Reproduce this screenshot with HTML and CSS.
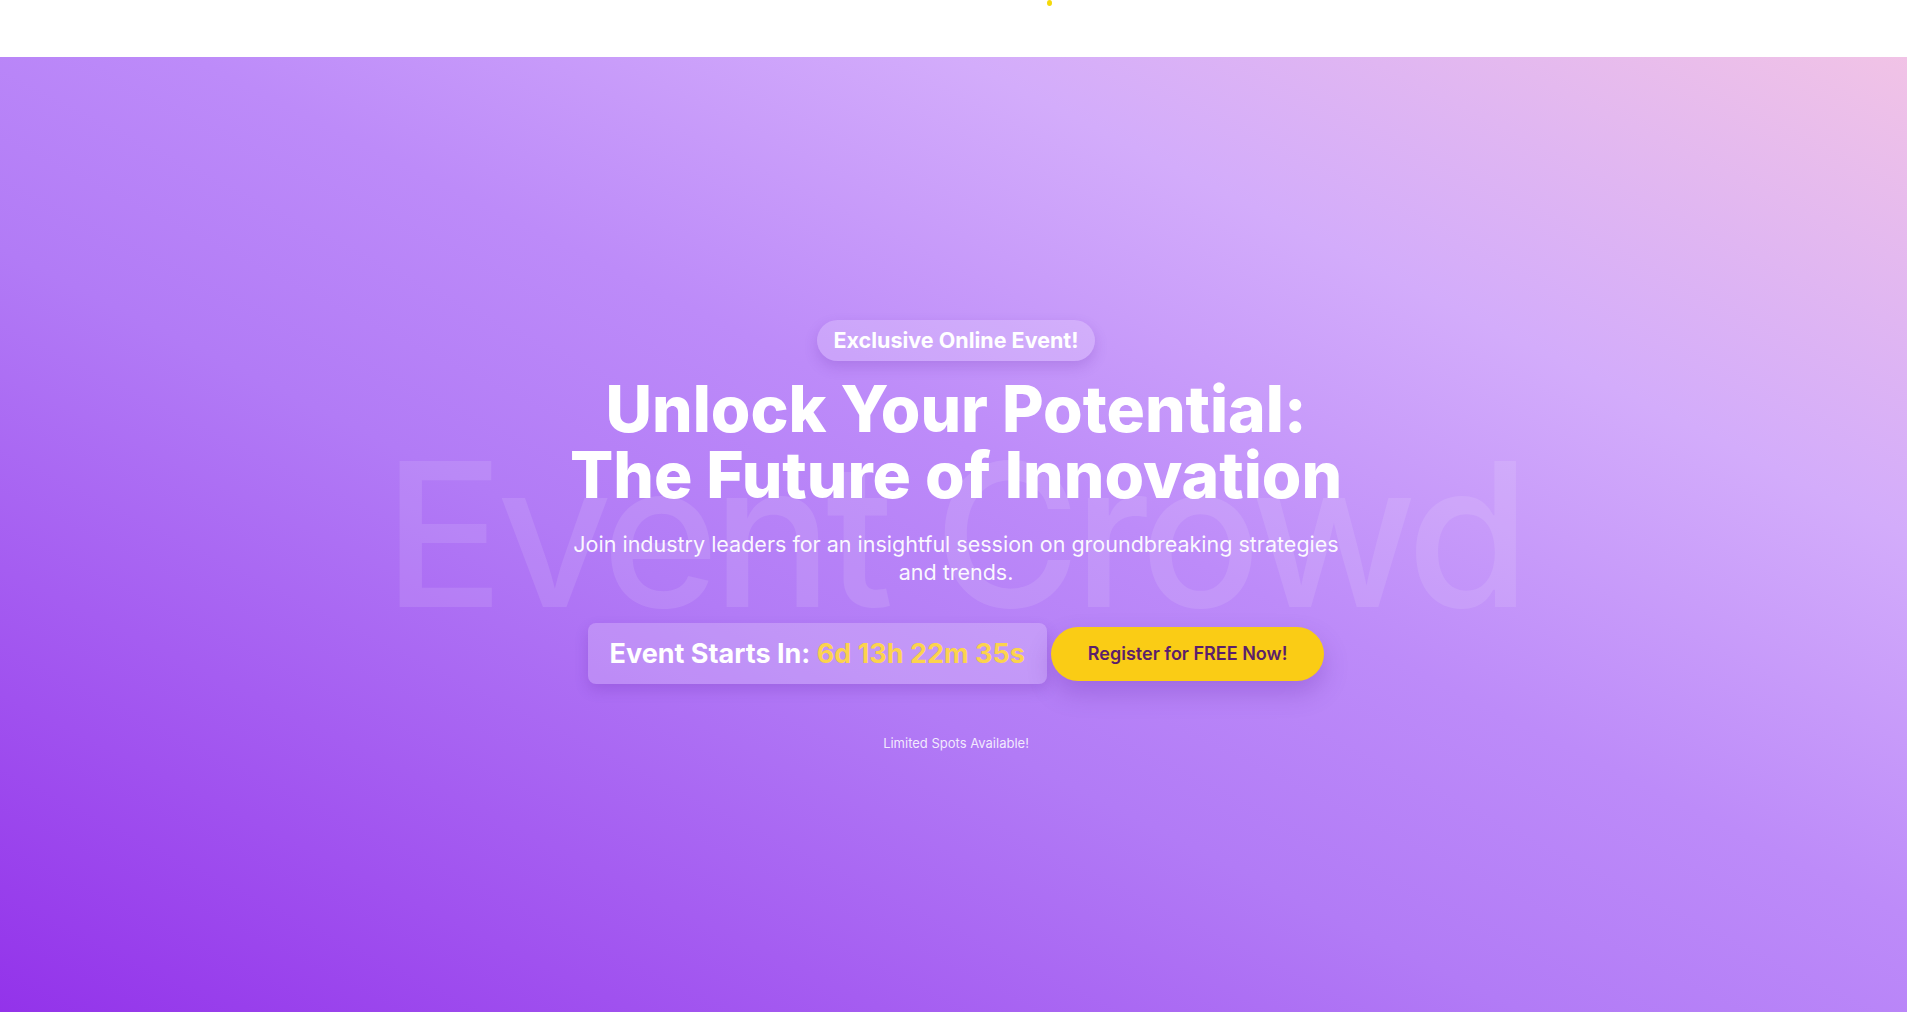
FILE: index.html
```html
<!DOCTYPE html>
<html lang="en">
<head>
<meta charset="utf-8">
<title>Unlock Your Potential</title>
<link rel="stylesheet" href="styles.css">
</head>
<body>
<header class="topbar">
  <span class="spark"></span>
</header>
<main class="hero">
  <div class="watermark" aria-hidden="true">Event Crowd</div>
  <div class="content">
    <span class="badge">Exclusive Online Event!</span>
    <h1 class="title">Unlock Your Potential:<br>The Future of Innovation</h1>
    <p class="subtitle">Join industry leaders for an insightful session on groundbreaking strategies and trends.</p>
    <div class="actions">
      <div class="countdown">Event Starts In: <span class="time">6d 13h 22m 35s</span></div>
      <button class="cta">Register for FREE Now!</button>
    </div>
    <p class="note">Limited Spots Available!</p>
  </div>
</main>
</body>
</html>
```
FILE: styles.css
```css
* { box-sizing: border-box; }
html, body { margin: 0; padding: 0; }
body {
  font-family: Inter, "Noto Sans", "Liberation Sans", sans-serif;
  background: #ffffff;
  overflow: hidden;
}
.topbar {
  position: relative;
  height: 57px;
  background: #ffffff;
}
.spark {
  position: absolute;
  left: 1047px;
  top: 0;
  width: 5px;
  height: 6px;
  border-radius: 50%;
  background: #f5d90a;
}
.hero {
  position: relative;
  height: 955px;
  display: flex;
  align-items: center;
  justify-content: center;
  overflow: hidden;
  background: linear-gradient(to top right, #9333ea 0%, #b27bf6 40%, #bd8bf9 55%, #d3acfb 75%, #f1c3e6 100%);
}
.watermark {
  position: absolute;
  left: 0;
  right: 0;
  top: 50%;
  transform: translateY(calc(-50% - 1px));
  text-align: center;
  font-size: 200px;
  font-weight: 500;
  line-height: 1;
  letter-spacing: -0.034em;
  color: rgba(255, 255, 255, 0.11);
  white-space: nowrap;
  pointer-events: none;
}
.content {
  position: relative;
  display: flex;
  flex-direction: column;
  align-items: center;
  text-align: center;
  color: #ffffff;
  padding-top: 4px;
  padding-left: 5px;
}
.badge {
  display: inline-block;
  padding: 6px 16px;
  border-radius: 9999px;
  background: rgba(255, 255, 255, 0.2);
  box-shadow: 0 6px 14px rgba(90, 30, 160, 0.18);
  font-size: 21.5px;
  line-height: 29px;
  font-weight: 700;
  margin-bottom: 15px;
}
.title {
  margin: 0 0 22px;
  font-size: 64px;
  line-height: 66px;
  font-weight: 800;
  letter-spacing: 0;
}
.subtitle {
  margin: 0 0 37px;
  max-width: 780px;
  font-size: 21.5px;
  line-height: 28px;
  font-weight: 400;
  color: rgba(255, 255, 255, 0.95);
}
.actions {
  display: flex;
  align-items: center;
  gap: 4px;
}
.countdown {
  padding: 15px 22px;
  border-radius: 8px;
  background: rgba(255, 255, 255, 0.2);
  box-shadow: 0 6px 14px rgba(90, 30, 160, 0.2);
  font-size: 27px;
  line-height: 31px;
  font-weight: 700;
  white-space: nowrap;
}
.time { color: #fcd34d; }
.cta {
  border: 0;
  padding: 12px 37px;
  border-radius: 9999px;
  background: #facc15;
  color: #5b1f6b;
  font-family: inherit;
  font-size: 18px;
  line-height: 30px;
  font-weight: 600;
  box-shadow: 0 12px 24px rgba(90, 30, 160, 0.25);
  cursor: pointer;
}
.note {
  margin: 49px 0 0;
  font-size: 13px;
  line-height: 20px;
  color: rgba(255, 255, 255, 0.85);
}
```
